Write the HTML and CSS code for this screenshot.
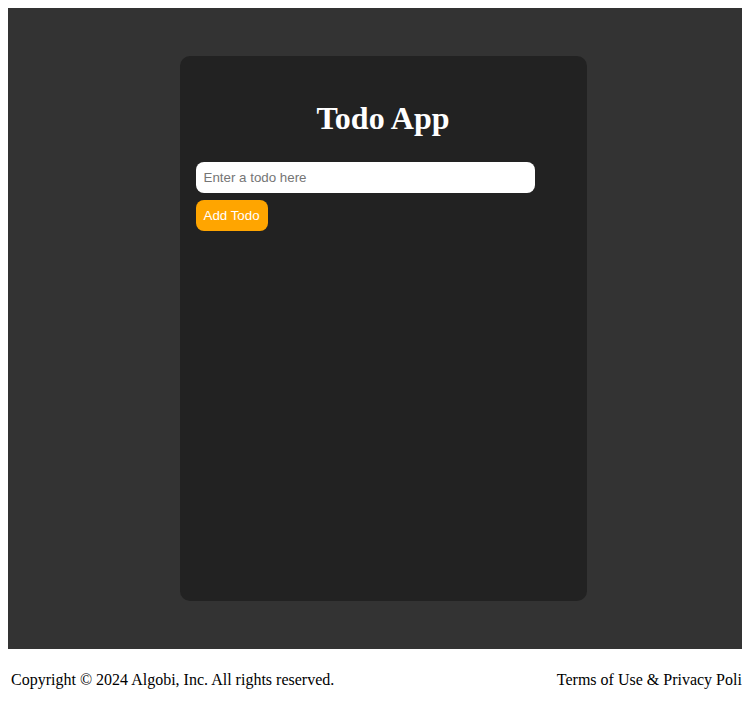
FILE: index.html
```html
<!DOCTYPE html>
<html lang="en">
<head>
<meta charset="utf-8">
<title>Todo App</title>
<link rel="stylesheet" href="styles.css">
</head>
<body>
<main class="stage">
  <section class="card">
    <h1 class="title">Todo App</h1>
    <form class="todo-form">
      <input class="todo-input" type="text" placeholder="Enter a todo here">
      <button class="add-btn" type="button">Add Todo</button>
    </form>
    <ul class="todo-list"></ul>
  </section>
</main>
<footer class="footer">
  <span class="copyright">Copyright © 2024 Algobi, Inc. All rights reserved.</span>
  <span class="legal">Terms of Use &amp; Privacy Policy</span>
</footer>
</body>
</html>
```

FILE: styles.css
```css
body {
  margin: 8px;
  font-family: "Liberation Serif", "Times New Roman", serif;
  font-size: 16px;
  color: #000;
  background: #fff;
}

.stage {
  width: 750px;
  box-sizing: border-box;
  background: #333333;
  padding: 48px 0;
  display: flex;
  justify-content: center;
}

.card {
  width: 407px;
  height: 545px;
  box-sizing: border-box;
  background: #222222;
  border-radius: 10px;
  padding: 44px 16px 16px;
  display: flex;
  flex-direction: column;
  align-items: flex-start;
}

.title {
  align-self: stretch;
  margin: 0 0 25px;
  text-align: center;
  color: #ffffff;
  font-family: "Liberation Serif", "Times New Roman", serif;
  font-size: 32px;
  font-weight: bold;
}

.todo-form {
  display: flex;
  flex-direction: column;
  align-items: flex-start;
  gap: 7px;
}

.todo-input {
  width: 339px;
  height: 31px;
  box-sizing: border-box;
  padding: 8px;
  border: none;
  border-radius: 8px;
  background: #ffffff;
  font-family: "Liberation Sans", Arial, sans-serif;
  font-size: 13.333px;
  color: #000;
  outline: none;
}

.todo-input::placeholder {
  color: #757575;
}

.add-btn {
  height: 31px;
  box-sizing: border-box;
  padding: 8px;
  border: none;
  border-radius: 8px;
  background: #ffa500;
  color: #ffffff;
  font-family: "Liberation Sans", Arial, sans-serif;
  font-size: 13.333px;
  line-height: 15px;
  cursor: pointer;
}

.todo-list {
  margin: 0;
  padding: 0;
  list-style: none;
}

.footer {
  width: 750px;
  box-sizing: border-box;
  display: flex;
  justify-content: space-between;
  padding: 22px 1px 18px 3px;
  white-space: nowrap;
}
```
